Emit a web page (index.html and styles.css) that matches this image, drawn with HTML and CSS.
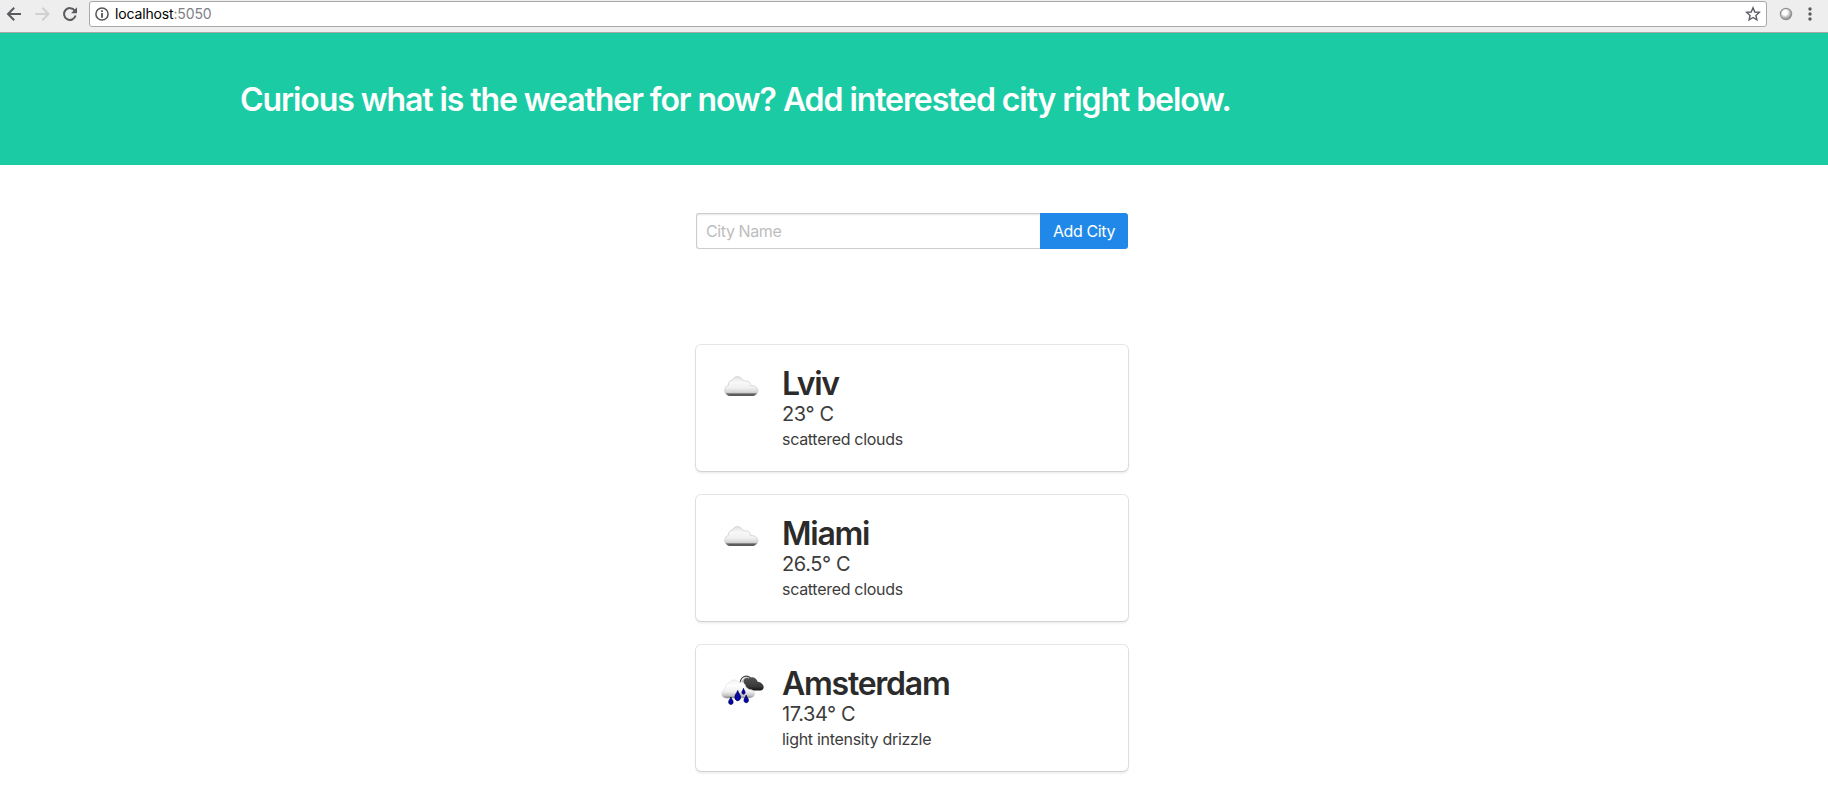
FILE: index.html
```html
<!DOCTYPE html>
<html lang="en">
<head>
<meta charset="utf-8">
<title>What's the weather like?</title>
<link rel="stylesheet" href="styles.css">
</head>
<body>
<svg class="defs" width="0" height="0" aria-hidden="true">
  <defs>
    <linearGradient id="cloud-fill" x1="0" y1="0" x2="0" y2="1">
      <stop offset="0" stop-color="#e2e2e2"/><stop offset=".3" stop-color="#f8f8f8"/><stop offset=".6" stop-color="#f0f0f0"/><stop offset=".84" stop-color="#d4d4d4"/><stop offset=".91" stop-color="#777"/><stop offset="1" stop-color="#555"/>
    </linearGradient>
    <linearGradient id="rain-fill" x1="0" y1="0" x2="0" y2="1">
      <stop offset="0" stop-color="#f1f1f1"/><stop offset=".3" stop-color="#fff"/><stop offset=".65" stop-color="#eee"/><stop offset=".86" stop-color="#c4c4c4"/><stop offset="1" stop-color="#777"/>
    </linearGradient>
    <linearGradient id="dark-fill" x1="0" y1="0" x2="0" y2="1">
      <stop offset="0" stop-color="#555"/><stop offset=".7" stop-color="#383838"/><stop offset="1" stop-color="#111"/>
    </linearGradient>
    <radialGradient id="ball" cx=".4" cy=".35" r=".65">
      <stop offset="0" stop-color="#fff"/><stop offset=".5" stop-color="#e2e2e2"/><stop offset="1" stop-color="#888"/>
    </radialGradient>
    <symbol id="cloud" viewBox="0 0 50 50">
      <g transform="translate(-.6 -5.3) scale(1 1.09)">
        <path d="M14.5 32.8C11.5 32.8 9.2 31 9.3 28.3C9.4 25.8 10.8 24.3 13 23.5C12.5 20.8 14.5 18.9 17 18.9C18.5 14.8 24.3 14.2 26.8 18.2C28.5 19 29 19.6 30 19.6C33 18.9 35 21 35.2 23.8C38 23.3 40.5 24.5 42 26.5C43.5 29 41.5 32.8 38 32.8Z" fill="url(#cloud-fill)" stroke="#c4c4c4" stroke-width=".6"/>
        <path d="M11.5 31.7H40.5C39.5 33 38.5 33.2 37.5 33.2H14.5C13 33.2 12 32.6 11.5 31.7Z" fill="#595959"/>
      </g>
    </symbol>
    <symbol id="drizzle" viewBox="0 0 50 50">
      <g transform="translate(-.8 -2.8)">
        <path d="M25 20.5C25.5 14.5 31 12 35.5 15.8" fill="none" stroke="#444" stroke-width="1.2"/>
        <path d="M27 20.5C27.5 15.8 32 14 35.5 17" fill="none" stroke="#999" stroke-width=".8"/>
        <path d="M28.5 20.5C27.5 17 30.5 14.8 33.5 16.2C36.5 13.5 41.5 15.5 42.5 19.5C44.5 19.5 46.2 20.5 47.2 22C49.7 24.3 48.3 28.2 45 28.4H36C32 28.2 29 24.2 28.5 20.5Z" fill="url(#dark-fill)"/>
        <path d="M11 36C7.5 35.5 5.8 33 6.8 29.7C7.5 27.8 8.5 27 10 26.2C10 22.5 12 20.8 14.5 20.4C16 16.8 22 16.8 23.5 20.2C27.5 19.2 30.5 21.5 30.7 25C33 26 33.2 27 34.5 27.4C37.5 27.5 39.8 29.2 39.5 32C39.2 34.2 37.5 35.4 35 35.7Z" fill="url(#rain-fill)" stroke="#ddd" stroke-width=".5"/>
        <g fill="#0505a8" stroke="#00005c" stroke-width=".8">
          <path d="M22.5 28.3C23 30.8 25.5 32 25.3 35.5C25.1 39.4 19.9 39.4 19.7 35.5C19.5 32 22 30.8 22.5 28.3Z"/>
          <path d="M15.7 34.8C16 36.8 18 37.8 17.9 40C17.8 43 13.6 43 13.5 40C13.4 37.8 15.4 36.8 15.7 34.8Z"/>
          <path d="M31 33C31.3 35 33.3 35.9 33.2 38.2C33.1 41.2 28.9 41.2 28.8 38.2C28.7 35.9 30.7 35 31 33Z"/>
          <path d="M28.3 26.2C28.5 27.9 30 28.6 29.9 30.4C29.8 32.6 26.8 32.6 26.7 30.4C26.6 28.6 28.1 27.9 28.3 26.2Z"/>
        </g>
      </g>
    </symbol>
  </defs>
</svg>

<header class="toolbar">
  <svg class="nav-icons" width="88" height="32" viewBox="0 0 88 32" fill="none" stroke-width="2">
    <path d="M21 14H8.5M14.2 7.8L8 14L14.2 20.2" stroke="#5a5b5e"/>
    <path d="M35.3 14H48M42.3 7.8L48.5 14L42.3 20.2" stroke="#d0d0d0"/>
    <path d="M74.8 10.7A5.9 5.9 0 1 0 75.6 15.6" stroke="#5a5b5e"/>
    <path d="M77 7.2V13.2H71Z" fill="#5a5b5e"/>
  </svg>
  <div class="address">
    <svg width="14" height="14" viewBox="0 0 14 14">
      <circle cx="7" cy="7" r="6.1" fill="none" stroke="#555" stroke-width="1.5"/>
      <path d="M6.1 3.3H7.9V4.9H6.1ZM6.1 6H7.9V10.8H6.1Z" fill="#555"/>
    </svg>
    <span class="url">localhost<span class="port">:5050</span></span>
    <svg class="star" width="16" height="16" viewBox="0 0 16 16">
      <path d="M8 1.8L9.8 6L14.3 6.4L10.9 9.4L11.9 13.8L8 11.5L4.1 13.8L5.1 9.4L1.7 6.4L6.2 6Z" fill="none" stroke="#5a5b66" stroke-width="1.4"/>
    </svg>
  </div>
  <svg class="menu-icons" width="61" height="32" viewBox="0 0 61 32">
    <circle cx="19" cy="14" r="5.6" fill="url(#ball)" stroke="#929292" stroke-width="1.2"/>
    <circle cx="18" cy="12.7" r="2.7" fill="#fff"/>
    <g fill="#5a5b5e"><circle cx="43" cy="9" r="1.7"/><circle cx="43" cy="14" r="1.7"/><circle cx="43" cy="19" r="1.7"/></g>
  </svg>
</header>

<section class="hero">
  <h1 class="hero-title">Curious what is the weather for now? Add interested city right below.</h1>
</section>

<main class="content">
  <form class="city-form">
    <input class="city-input" type="text" placeholder="City Name">
    <button class="city-button" type="button">Add City</button>
  </form>
  <section class="cities">
    <article class="card">
      <svg class="weather" width="50" height="50"><use href="#cloud"/></svg>
      <div class="details">
        <h2 class="city">Lviv</h2>
        <p class="temp">23° C</p>
        <p class="summary">scattered clouds</p>
      </div>
    </article>
    <article class="card">
      <svg class="weather" width="50" height="50"><use href="#cloud"/></svg>
      <div class="details">
        <h2 class="city">Miami</h2>
        <p class="temp">26.5° C</p>
        <p class="summary">scattered clouds</p>
      </div>
    </article>
    <article class="card">
      <svg class="weather" width="50" height="50"><use href="#drizzle"/></svg>
      <div class="details">
        <h2 class="city">Amsterdam</h2>
        <p class="temp">17.34° C</p>
        <p class="summary">light intensity drizzle</p>
      </div>
    </article>
  </section>
</main>
</body>
</html>
```
FILE: styles.css
```css
* { box-sizing: border-box; }
body { margin: 0; min-height: 804px; overflow: hidden; background: #fff; color: #3c3c3c; font: 16px/24px Inter, "Liberation Sans", sans-serif; }
h1, h2, p { margin: 0; }
.defs { display: block; height: 0; }
.toolbar { display: flex; height: 33px; background: #eee; border-bottom: 1px solid #a8a8a8; }
.nav-icons, .menu-icons { display: block; flex: none; }
.address { display: flex; align-items: center; flex: 1; height: 26px; margin-top: 1px; margin-left: 1px; padding: 0 5px; border: 1px solid #a9a9a9; border-radius: 3px; background: #fff; }
.url { margin-left: 6px; color: #000; font-size: 14px; letter-spacing: -0.15px; }
.port { color: #808087; }
.star { margin-left: auto; }
.hero { height: 132px; padding: 49px 0 47px 240px; background: #1acba4; }
.hero-title { color: #fff; font-size: 32px; font-weight: 600; line-height: 36px; letter-spacing: -1.08px; white-space: nowrap; }
.content { width: 432px; margin: 0 auto 0 696px; padding-top: 48px; }
.city-form { display: flex; height: 36px; }
.city-input { flex: 1; min-width: 0; padding: 0 9px; border: 1px solid #ccc; border-right: 0; border-radius: 3px 0 0 3px; box-shadow: inset 0 1px 2px rgba(10,10,10,.1); font: inherit; letter-spacing: -0.4px; }
.city-input::placeholder { color: #bdbdbd; opacity: 1; }
.city-button { width: 88px; padding: 0; border: 0; border-radius: 0 3px 3px 0; background: #1f88e8; color: #fff; font: inherit; letter-spacing: -0.4px; }
.cities { display: grid; gap: 24px; padding-top: 96px; }
.card { display: flex; gap: 16px; height: 126px; padding: 20px; border-radius: 5px; background: #fff; box-shadow: 0 2px 3px rgba(10,10,10,.1), 0 0 0 1px rgba(10,10,10,.1); }
.weather { display: block; flex: none; }
.city { padding-top: 1px; color: #2b2b2b; font-size: 32px; font-weight: 600; line-height: 36px; letter-spacing: -1.25px; }
.temp { font-size: 20px; line-height: 25px; letter-spacing: -0.4px; }
.summary { font-size: 16px; line-height: 24px; letter-spacing: -0.3px; }
```
